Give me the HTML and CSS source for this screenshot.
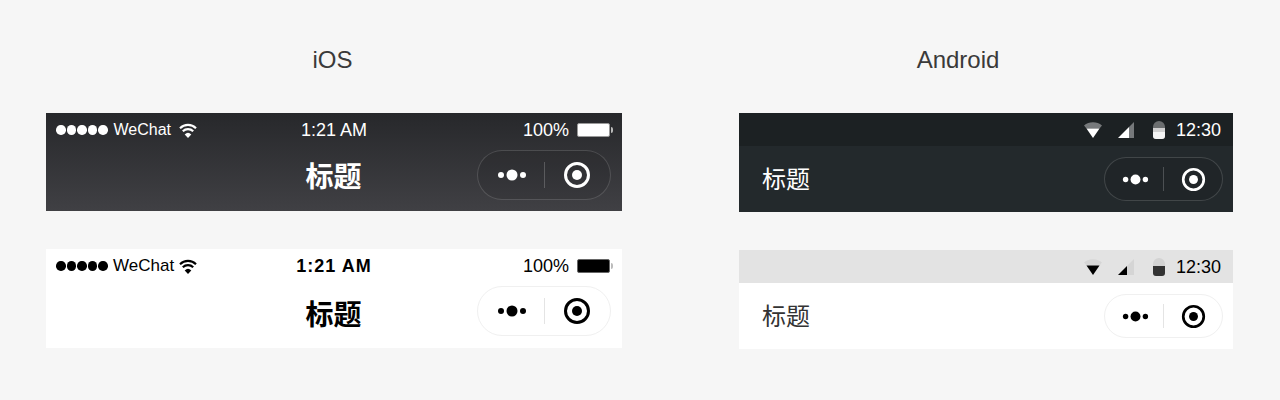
FILE: index.html
```html
<!DOCTYPE html>
<html lang="zh-CN">
<head>
    <meta charset="UTF-8">
    <title>iOS / Android</title>
    <link rel="stylesheet" href="styles.css">
</head>
<body>
    <svg class="defs" width="0" height="0">
        <symbol id="dots" viewBox="0 0 30 12">
            <circle cx="4" cy="6" r="3"/>
            <circle cx="15" cy="6" r="5.500"/>
            <circle cx="26" cy="6" r="3"/>
        </symbol>
        <symbol id="target" viewBox="0 0 28 28">
            <circle cx="14" cy="14" r="11.500" fill="none" stroke="currentColor" stroke-width="3"/>
            <circle cx="14" cy="14" r="5"/>
        </symbol>
        <symbol id="wifi" viewBox="0 0 18 15">
            <path d="M1 5.200a11.500 11.500 0 0 1 16 0M3.800 8.200a7.500 7.500 0 0 1 10.400 0" fill="none" stroke="currentColor" stroke-width="2.200"/>
            <path d="M9 15l-3.300-3.600a4.800 4.800 0 0 1 6.600 0z"/>
        </symbol>
    </svg>

    <main class="page">
        <section class="col col-ios">
            <h2 class="col-title">iOS</h2>

            <div class="bar ios dark">
                <div class="status">
                    <div class="status-left">
                        <span class="signal"><i></i><i></i><i></i><i></i><i></i></span>
                        <span class="carrier">WeChat</span>
                        <svg class="wifi"><use href="#wifi"/></svg>
                    </div>
                    <div class="clock">1:21 AM</div>
                    <div class="status-right">
                        <span class="percent">100%</span>
                        <span class="battery"></span>
                    </div>
                </div>
                <div class="nav">
                    <div class="title">标题</div>
                    <div class="capsule">
                        <span class="capsule-btn"><svg class="icon-dots"><use href="#dots"/></svg></span>
                        <span class="capsule-btn"><svg class="icon-target"><use href="#target"/></svg></span>
                    </div>
                </div>
            </div>

            <div class="bar ios light">
                <div class="status">
                    <div class="status-left">
                        <span class="signal"><i></i><i></i><i></i><i></i><i></i></span>
                        <span class="carrier">WeChat</span>
                        <svg class="wifi"><use href="#wifi"/></svg>
                    </div>
                    <div class="clock">1:21 AM</div>
                    <div class="status-right">
                        <span class="percent">100%</span>
                        <span class="battery"></span>
                    </div>
                </div>
                <div class="nav">
                    <div class="title">标题</div>
                    <div class="capsule">
                        <span class="capsule-btn"><svg class="icon-dots"><use href="#dots"/></svg></span>
                        <span class="capsule-btn"><svg class="icon-target"><use href="#target"/></svg></span>
                    </div>
                </div>
            </div>
        </section>

        <section class="col col-android">
            <h2 class="col-title">Android</h2>

            <div class="bar android dark">
                <div class="status">
                    <svg class="a-wifi" viewBox="0 0 18 16">
                        <path class="faint" d="M0 3.500a14 14 0 0 1 18 0L15.500 6.500h-13z"/>
                        <path d="M2.500 6.500h13L9 16z"/>
                    </svg>
                    <svg class="a-cell" viewBox="0 0 16 16">
                        <path class="faint" d="M16 0v16h-5V5z"/>
                        <path d="M11 5v11H0z"/>
                    </svg>
                    <span class="a-batt"><span class="a-batt-level"></span></span>
                    <span class="a-clock">12:30</span>
                </div>
                <div class="nav">
                    <div class="title">标题</div>
                    <div class="capsule">
                        <span class="capsule-btn"><svg class="icon-dots"><use href="#dots"/></svg></span>
                        <span class="capsule-btn"><svg class="icon-target"><use href="#target"/></svg></span>
                    </div>
                </div>
            </div>

            <div class="bar android light">
                <div class="status">
                    <svg class="a-wifi" viewBox="0 0 18 16">
                        <path class="faint" d="M0 3.500a14 14 0 0 1 18 0L15.500 6.500h-13z"/>
                        <path d="M2.500 6.500h13L9 16z"/>
                    </svg>
                    <svg class="a-cell" viewBox="0 0 16 16">
                        <path class="faint" d="M16 0v16H0z"/>
                        <path d="M9 7v9H0z"/>
                    </svg>
                    <span class="a-batt"><span class="a-batt-level"></span></span>
                    <span class="a-clock">12:30</span>
                </div>
                <div class="nav">
                    <div class="title">标题</div>
                    <div class="capsule">
                        <span class="capsule-btn"><svg class="icon-dots"><use href="#dots"/></svg></span>
                        <span class="capsule-btn"><svg class="icon-target"><use href="#target"/></svg></span>
                    </div>
                </div>
            </div>
        </section>
    </main>
</body>
</html>
```

FILE: styles.css
```css
* {
    box-sizing: border-box;
}
body {
    margin: 0;
    height: 400px;
    overflow: hidden;
    background: #f6f6f6;
    color: #333;
    font-family: "Liberation Sans", "Noto Sans CJK SC", sans-serif;
}
.defs {
    display: block;
    height: 0;
}
.page {
    display: flex;
    padding: 46px 0 0 46px;
}
.col {
    display: flex;
    flex-direction: column;
}
.col-ios {
    width: 576px;
}
.col-android {
    width: 494px;
    margin-left: 117px;
}
.col-title {
    margin: 0 0 39px;
    font-size: 24px;
    line-height: 28px;
    font-weight: 400;
    text-align: center;
    color: #3a3a3a;
}
.col-ios .col-title {
    padding-right: 3px;
}
.col-android .col-title {
    padding-right: 56px;
}

/* bars */
.bar {
    display: flex;
    flex-direction: column;
    margin-bottom: 38px;
}
.bar.dark {
    color: #fff;
}
.bar.light {
    color: #000;
    background: #fff;
}
.ios.dark {
    background: linear-gradient(#27282b, #404044);
}
.android.dark {
    background: #23292c;
}

.nav {
    display: flex;
    align-items: center;
}
.title {
    font-size: 24px;
}

/* ios */
.ios .status {
    display: grid;
    grid-template-columns: 1fr auto 1fr;
    align-items: center;
    height: 34px;
    padding: 0 10px;
}
.status-left {
    display: flex;
    align-items: center;
}
.signal {
    display: flex;
    gap: 1px;
}
.signal i {
    width: 9.500px;
    height: 9.500px;
    border-radius: 50%;
    background: currentColor;
}
.carrier {
    margin-left: 6px;
    font-size: 16px;
}
.wifi {
    width: 18px;
    height: 15px;
    margin-left: 8px;
    fill: currentColor;
}
.clock {
    font-size: 18px;
}
.status-right {
    display: flex;
    align-items: center;
    justify-content: flex-end;
}
.percent {
    font-size: 18px;
}
.battery {
    position: relative;
    width: 33px;
    height: 14px;
    margin: 0 2px 0 8px;
    border: 1px solid #999;
    border-radius: 2px;
    background: #fff;
}
.battery::after {
    content: "";
    position: absolute;
    top: 3px;
    right: -4px;
    width: 2px;
    height: 6px;
    border-radius: 0 2px 2px 0;
    background: #bbb;
}
.ios .nav {
    justify-content: flex-end;
    padding: 3px 11px 11px;
}
.ios .title {
    flex: 1;
    padding-left: 133px;
    text-align: center;
    font-size: 28px;
    font-weight: 700;
}
.ios .capsule {
    width: 134px;
    height: 50px;
}
.ios .icon-dots {
    margin-left: 2px;
}
.ios.light .carrier {
    margin-left: 5.500px;
    font-size: 17px;
}
.ios.light .wifi {
    margin-left: 5px;
}
.ios.light .clock {
    font-weight: 700;
    letter-spacing: 1px;
}
.ios.light .nav {
    padding-bottom: 12px;
}
.ios.light .title {
    padding-top: 4px;
}
.ios.light .battery {
    background: #000;
    border-color: #666;
}

/* capsule */
.capsule {
    display: flex;
    align-items: center;
    flex: none;
    border: 1px solid rgba(255, 255, 255, 0.15);
    border-radius: 25px;
    background: rgba(0, 0, 0, 0.08);
}
.light .capsule {
    border-color: #f0f0f0;
    background: #fff;
}
.capsule-btn {
    display: flex;
    flex: 1;
    align-items: center;
    justify-content: center;
}
.capsule-btn + .capsule-btn {
    height: 56%;
    border-left: 1px solid rgba(255, 255, 255, 0.2);
}
.light .capsule-btn + .capsule-btn {
    border-left-color: #e4e4e4;
}
.icon-dots {
    width: 30px;
    height: 12px;
    fill: currentColor;
}
.icon-target {
    width: 28px;
    height: 28px;
    fill: currentColor;
}

/* android */
.android .status {
    display: flex;
    align-items: center;
    justify-content: flex-end;
    height: 33px;
    padding-right: 12px;
}
.android.dark .status {
    background: #1c2123;
}
.android.light .status {
    background: #e3e3e3;
}
.a-wifi {
    width: 18px;
    height: 16px;
    fill: currentColor;
}
.a-cell {
    width: 16px;
    height: 16px;
    margin-left: 16px;
    fill: currentColor;
}
.faint {
    opacity: 0.4;
}
.light .faint {
    opacity: 0.06;
}
.a-batt {
    display: flex;
    align-items: flex-end;
    width: 12px;
    height: 18px;
    margin-left: 19px;
    overflow: hidden;
    border-radius: 6px 6px 3px 3px;
    background: rgba(255, 255, 255, 0.35);
}
.light .a-batt {
    background: rgba(0, 0, 0, 0.07);
}
.a-batt-level {
    display: block;
    width: 100%;
    height: 11px;
    background: linear-gradient(#d0d0d0 35%, #f4f4f4 35%);
}
.light .a-batt-level {
    height: 10px;
    background: #333;
}
.a-clock {
    margin: 2px 0 0 11px;
    font-size: 18px;
}
.android .nav {
    justify-content: space-between;
    padding: 11px 10px 11px 23px;
}
.android .title {
    padding-bottom: 4px;
}
.android.light .title {
    color: #333;
}
.android .capsule {
    width: 119px;
    height: 44px;
}
.android .icon-dots {
    width: 27px;
    height: 11px;
    margin-left: 2px;
}
.android .icon-target {
    width: 25px;
    height: 25px;
}
```
